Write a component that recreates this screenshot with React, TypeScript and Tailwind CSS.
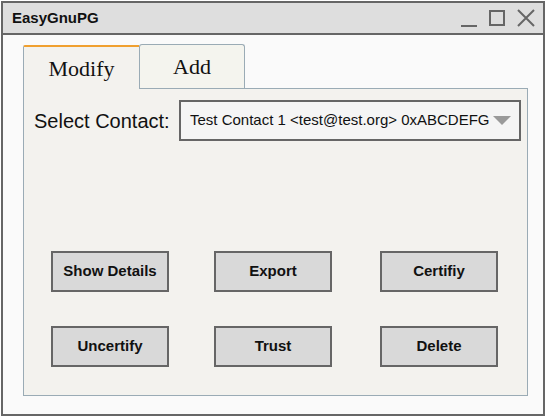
import React from "react";

const buttons = [
  ["Show Details", "Export", "Certifiy"],
  ["Uncertify", "Trust", "Delete"],
];

const colMargin = ["ml-0", "ml-[45px]", "ml-[48px]"];

function WindowControls() {
  return (
    <div className="flex items-center gap-[12px] pr-[8px]">
      <svg width="16" height="18" viewBox="0 0 16 18">
        <line x1="0" y1="17" x2="16" y2="17" stroke="#666" strokeWidth="2" />
      </svg>
      <svg width="16" height="16" viewBox="0 0 16 16">
        <rect x="1" y="1" width="14" height="14" fill="none" stroke="#666" strokeWidth="2" />
      </svg>
      <svg width="18" height="18" viewBox="0 0 18 18">
        <path d="M1 1 L17 17 M17 1 L1 17" stroke="#666" strokeWidth="2" />
      </svg>
    </div>
  );
}

export default function App() {
  return (
    <div className="w-[547px] h-[417px] bg-white pt-[1px] pl-[1px] font-['Liberation_Sans',Arial,sans-serif]">
      <div className="w-[544px] h-[415px] border-2 border-[#666] bg-[#fafafa] flex flex-col">
        <div className="h-[32px] shrink-0 bg-[#dedede] border-b-2 border-[#666] flex items-center justify-between pl-[9px]">
          <span className="text-[15px] font-bold text-[#111]">EasyGnuPG</span>
          <WindowControls />
        </div>

        <div className="pt-[9px] pl-[20px] pr-[15px]">
          <div className="flex items-end h-[44px] font-['Liberation_Serif','Times_New_Roman',serif] text-[22px] text-[#111]">
            <div className="w-[116px] h-[44px] bg-[#f3f2ee] border-t-2 border-t-[#f0a030] border-l border-l-[#9aabb5] rounded-tl-[2px] flex items-center justify-center -mb-px relative z-10">
              Modify
            </div>
            <div className="w-[106px] h-[44px] bg-[#f4f4ee] border border-b-0 border-[#9aabb5] rounded-t-[3px] flex items-center justify-center">
              Add
            </div>
          </div>

          <div className="w-[505px] h-[308px] bg-[#f3f2ee] border border-[#9aabb5]">
            <div className="flex items-center pt-[11px] pl-[10px]">
              <span className="text-[20px] text-[#111] w-[145px]">Select Contact:</span>
              <div className="w-[342px] h-[41px] border-2 border-[#666] bg-[#f5f5f5] flex items-center justify-between pl-[9px] pr-[8px]">
                <span className="text-[15px] text-[#111]">Test Contact 1 &lt;test@test.org&gt; 0xABCDEFG</span>
                <svg width="18" height="9" viewBox="0 0 18 9">
                  <polygon points="0,0 18,0 9,9" fill="#9a9a9a" />
                </svg>
              </div>
            </div>

            <div className="flex flex-col gap-[34px] pt-[110px] pl-[27px]">
              {buttons.map((row, i) => (
                <div key={i} className="flex">
                  {row.map((label, j) => (
                    <button
                      key={label}
                      className={`${colMargin[j]} w-[118px] h-[41px] border-2 border-[#666] bg-[#d9d9d9] text-[15px] font-bold text-[#111]`}
                    >
                      {label}
                    </button>
                  ))}
                </div>
              ))}
            </div>
          </div>
        </div>
      </div>
    </div>
  );
}
